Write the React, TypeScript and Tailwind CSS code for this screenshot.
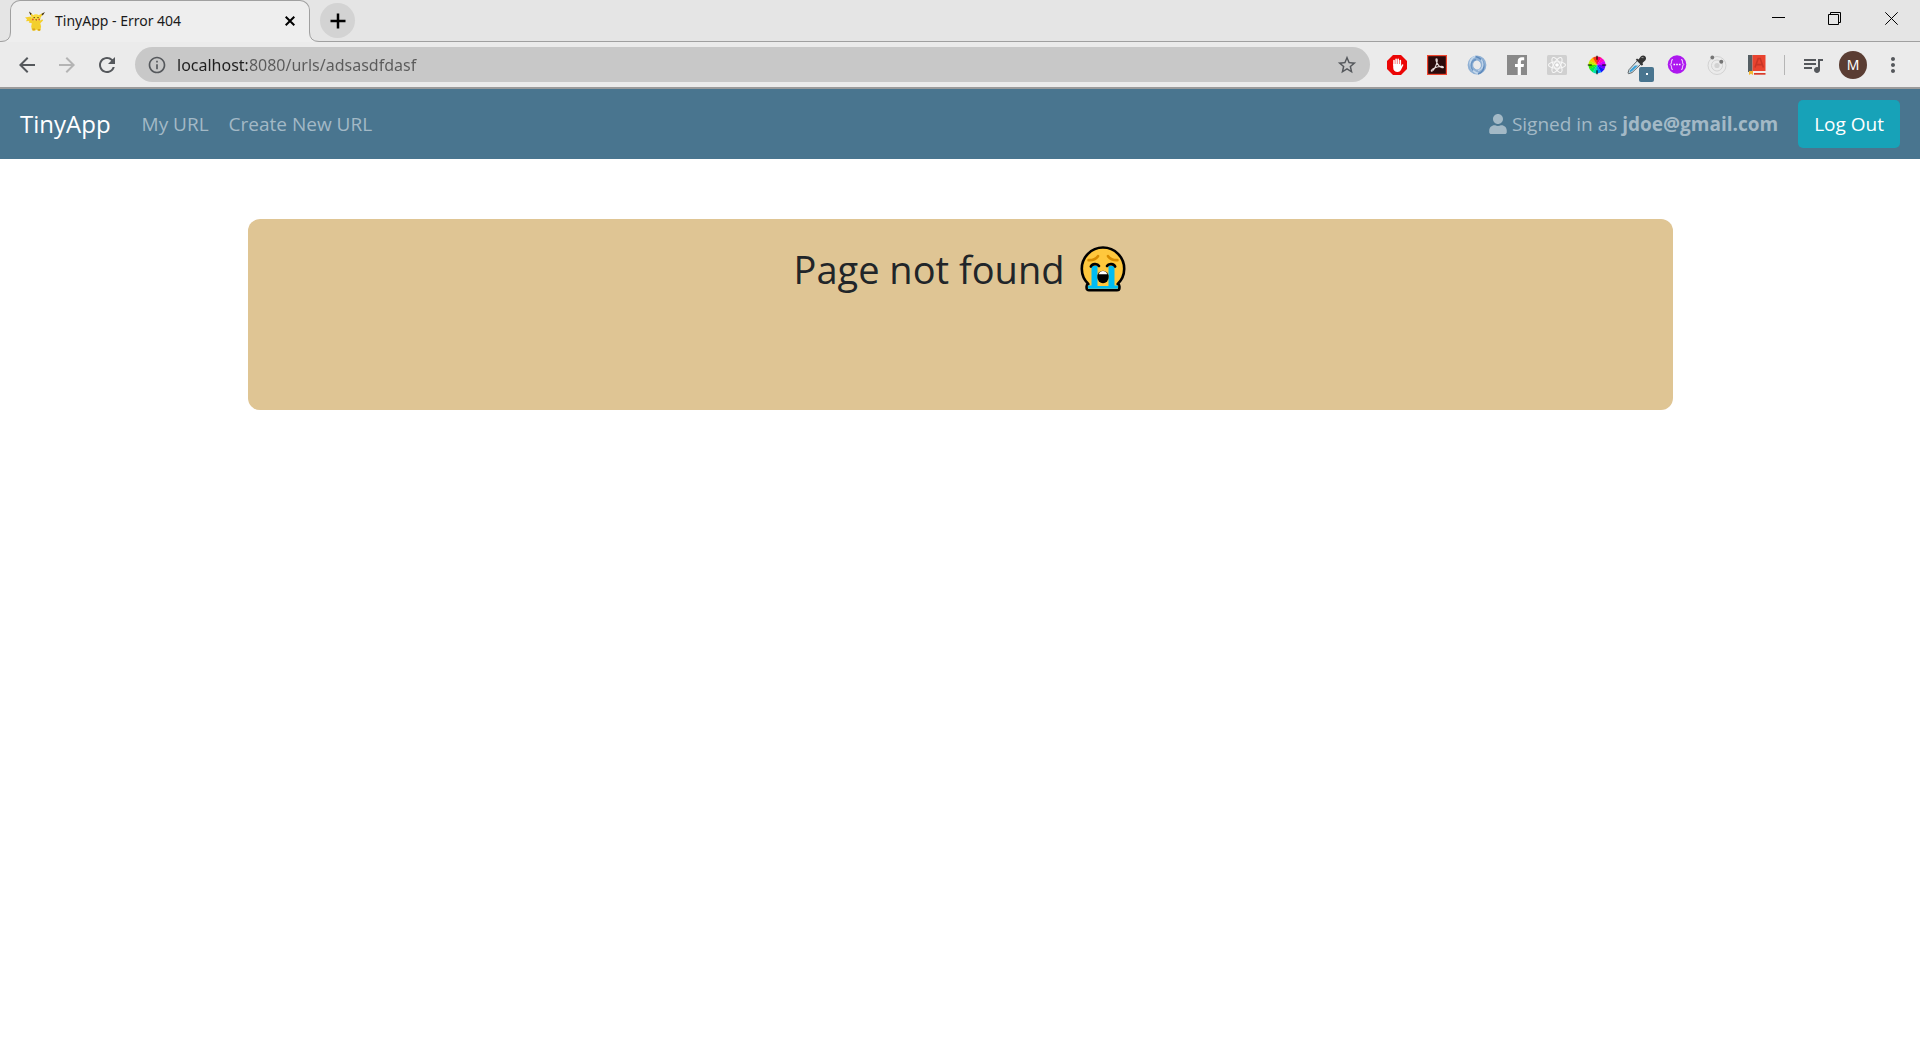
import type { ReactNode } from "react";
import { FaUser } from "react-icons/fa";
import { MdArrowBack, MdArrowForward, MdInfoOutline, MdMoreVert, MdQueueMusic, MdRefresh, MdStarBorder } from "react-icons/md";

function Pikachu() {
  return (
    <svg viewBox="0 0 20 20" className="size-5 shrink-0" aria-hidden="true">
      <path d="M0 6.400 5.800 5.400 8 8.500 7.500 12.500 3.800 11.600 4.400 10 1 10.200 2 8.300Z" fill="#f5cf2b" />
      <path d="M4.300 1 9 4.700 7 7Z" fill="#f4cf2b" />
      <path d="M4 .4 6.700 2.500 5.400 4.200Z" fill="#3b2b16" />
      <path d="M13 4.600 19.400 1.600 15 7.300Z" fill="#f4cf2b" />
      <path d="M16.300 3.100 19.900 1 17.800 4.500Z" fill="#3b2b16" />
      <ellipse cx="11" cy="7.200" rx="4.500" ry="3.900" fill="#fadb3c" />
      <path d="M7.400 9.800h7.300l2.600-1.500.8 1.200-2.800 2.700.8 3.400-.8 4.200h-2.400l-1.400-1.200-1.600 1.200-2.800-.2-.9-4.200Z" fill="#f3cf2d" />
      <path d="M7 17.500h3v1.600l-1.800.4ZM13 18h2.400l-.4 1.800h-1.800Z" fill="#d9a41c" />
      <circle cx="9.200" cy="6.600" r=".7" fill="#33230f" />
      <circle cx="13" cy="6.600" r=".7" fill="#33230f" />
      <circle cx="7.900" cy="8.500" r=".9" fill="#e2562c" />
      <circle cx="14.200" cy="8.500" r=".9" fill="#e2562c" />
      <path d="M10.200 8.200h2l-1 1.800Z" fill="#a52f1d" />
    </svg>
  );
}

function AdBlock() {
  return (
    <svg viewBox="0 0 20 20" className="size-5">
      <path d="M6 0h8l6 6v8l-6 6H6l-6-6V6Z" fill="#ec0606" />
      <path d="M7 10V5.600M9.100 10V4.200M11.200 10V4.200M13.300 10V5.600" stroke="#fff" strokeWidth="1.600" strokeLinecap="round" />
      <path d="M6.200 9h7.900v2.300l1-1.700q1-.8 1.300.3l-2.600 5.400Q12.800 17 10.800 17 6.200 16.800 6.200 12.500Z" fill="#fff" />
    </svg>
  );
}

function Acrobat() {
  return (
    <svg viewBox="0 0 20 20" className="size-5">
      <rect x=".6" y=".6" width="18.8" height="18.8" fill="#2b0b0d" stroke="#f1452e" strokeWidth="1.2" />
      <path d="M9.6 3.8C8.2 3.6 9.4 8.2 12 10.8c2 2 4.7 2.5 4.4 1.4-.4-1.4-5.4-.9-8.8.7-3 1.4-3.9 3.2-2.9 3.4 1.4.2 3.8-4.2 4.9-7.7.7-2.3 1-4.700 0-4.800Z" fill="none" stroke="#e6dada" strokeWidth="1.1" />
    </svg>
  );
}

function JsonSwirl() {
  return (
    <svg viewBox="0 0 20 20" className="size-5">
      <circle cx="10" cy="10" r="6.600" fill="none" stroke="#8fb0d4" strokeWidth="5.600" />
      <path d="M9 1C4 3 2.500 7 3.500 11s4 6.500 8 7.500" fill="none" stroke="#c4d8ec" strokeWidth="1.600" />
      <path d="M11 19c5-2 6.500-6 5.500-10s-4-6.500-8-7.500" fill="none" stroke="#5d89bb" strokeWidth="1.600" />
      <path d="M6 15.500C2.500 11 4 5.500 9 4.500" fill="none" stroke="#6c96c4" strokeWidth="1.400" />
      <path d="M14 4.500C17.500 9 16 14.500 11 15.500" fill="none" stroke="#bdd2e8" strokeWidth="1.400" />
      <ellipse cx="10" cy="10" rx="3.200" ry="4.400" fill="#eaeaea" transform="rotate(-12 10 10)" />
    </svg>
  );
}

function Facebook() {
  return (
    <svg viewBox="0 0 20 20" className="size-5">
      <path d="M0 0h20v20H0Z" fill="#898989" />
      <path d="M10.700 20v-8H8V9h2.700V6.500c0-2.800 1.700-4.200 4.100-4.200 1.100 0 2.100.1 2.400.1v2.900h-1.700c-1.300 0-1.600.7-1.600 1.600V9H17l-.4 3h-2.700v8Z" fill="#fff" />
    </svg>
  );
}

function ReactTools() {
  return (
    <svg viewBox="0 0 20 20" className="size-5">
      <rect width="20" height="20" rx="1.500" fill="#d0d0d0" />
      <g fill="none" stroke="#f7f7f7" strokeWidth="1.100">
        <ellipse cx="10" cy="10" rx="8.500" ry="3.300" />
        <ellipse cx="10" cy="10" rx="8.500" ry="3.300" transform="rotate(60 10 10)" />
        <ellipse cx="10" cy="10" rx="8.500" ry="3.300" transform="rotate(120 10 10)" />
      </g>
      <circle cx="10" cy="10" r="1.800" fill="#fff" />
    </svg>
  );
}

const wheelColors = ["#ff0060", "#ff00c8", "#d000ff", "#7000ff", "#1414ff", "#0090ff", "#00e0b0", "#00e850", "#30e800", "#c0f000", "#ffc000", "#ff4010"];

function ColorWheel() {
  return (
    <svg viewBox="0 0 20 20" className="size-5">
      {wheelColors.map((color, i) => (
        <path key={color} d="M10 10V1.500a8.500 8.500 0 0 1 4.400 1.200Z" fill={color} transform={`rotate(${i * 30} 10 10)`} />
      ))}
      <path d="M10 .8v4M10 15.200v4M.8 10h4M15.200 10h4" stroke="#000" strokeWidth="1.100" />
    </svg>
  );
}

function Eyedropper() {
  return (
    <span className="relative block size-5">
      <svg viewBox="0 0 20 20" className="size-5">
        <path d="M10.500 5.500 14 9 5 17.600 1.500 18.700 1 18l1-3.300Z" fill="#dfe7ea" stroke="#5b6468" strokeWidth="1" />
        <path d="M8 10.500h3L5 16.300l-2.700 1.300.9-2.500Z" fill="#3aa0d8" />
        <path d="M8.800 4.800 10 3.600l1.500.8L14 1.200c3-2 6.500 1 4.400 4L15.500 8l.6 1.500-1.300 1.300Z" fill="#353535" />
        <path d="m14.500 2.500 2 .2" stroke="#999" strokeWidth="1" />
      </svg>
      <span className="absolute top-3 left-3 flex size-[15px] items-center justify-center rounded-xs bg-[#49758f]">
        <span className="size-0.5 bg-white" />
      </span>
    </span>
  );
}

function PurpleBraces() {
  return (
    <svg viewBox="0 0 20 20" className="size-5">
      <circle cx="10" cy="9.500" r="9.300" fill="#ad18ef" />
      <path d="M6 4.700c-1.700 0-1.500 1-1.500 2.500 0 1.300-.4 2.100-1.700 2.300 1.300.2 1.700 1 1.700 2.300 0 1.500-.2 2.500 1.500 2.500M14 4.700c1.700 0 1.500 1 1.500 2.500 0 1.300.4 2.100 1.700 2.300-1.300.2-1.700 1-1.700 2.300 0 1.500.2 2.500-1.500 2.500" fill="none" stroke="#e7b8fb" strokeWidth="1.200" />
      <path d="M6.500 9.500h1.600M9.200 9.500h1.600M11.900 9.500h1.600" stroke="#fff" strokeWidth="1.500" />
    </svg>
  );
}

function Orbit() {
  return (
    <svg viewBox="0 0 20 20" className="size-5">
      <g fill="none" stroke="#d2d2d2">
        <circle cx="10" cy="10.500" r="9" />
        <circle cx="10" cy="10.500" r="5.500" />
      </g>
      <circle cx="10" cy="10.500" r="2.600" fill="#d2d2d2" />
      <circle cx="5.300" cy="2.500" r="1.900" fill="#757575" />
      <circle cx="14.300" cy="6.700" r="2" fill="#757575" />
    </svg>
  );
}

function Dictionary() {
  return (
    <svg viewBox="0 0 20 20" className="size-5">
      <path d="M1 0h4.500v17H1Z" fill="#545e63" />
      <path d="M5.500 0H18.500v16H5.500Z" fill="#e9432f" />
      <path d="M2 16.500h16.500v1.300H2Z" fill="#f7f0ee" />
      <path d="M7 18h11.500v1.700H7Z" fill="#d93a29" />
      <path d="M2 16h4v4l-2-1.300L2 20Z" fill="#f5b731" />
      <path d="m8 12.500 3.200-9h2l3.200 9M9.300 9.600h5.800" fill="none" stroke="#c93526" strokeWidth="1.600" />
    </svg>
  );
}

function SobbingFace() {
  return (
    <svg viewBox="0 0 46 46" className="size-[46px]" role="img" aria-label="Loudly crying face">
      <path d="M9 44.200c-1.500 0-2.400-.9-2.400-2.300v-1.600q0-1.800 1.700-2.300A21.200 21.200 0 1 1 37.700 38q1.700.5 1.700 2.300v1.600c0 1.400-.9 2.300-2.400 2.300Z" fill="#ffc83d" stroke="#000" strokeWidth="2.600" strokeLinejoin="round" />
      <path d="M11.500 20h6v20h11V20h6v19.500h3.600v1.700c0 1-.6 1.600-1.600 1.600H9.500c-1 0-1.600-.6-1.600-1.600v-1.700h3.600Z" fill="#00bcf2" />
      <path d="M10.800 20.600c1.200-3 6.600-3.400 8.200-.6M27 20c1.600-2.800 7-2.400 8.200.6" fill="none" stroke="#000" strokeWidth="2.600" strokeLinecap="round" />
      <path d="M8.600 14.200c4 .2 6.900-.6 9.400-4M28 10.200c2.500 3.400 5.400 4.200 9.400 4" fill="none" stroke="#d78c00" strokeWidth="2.700" strokeLinecap="round" />
      <ellipse cx="23" cy="31" rx="5.700" ry="6.200" fill="#000" />
      <path d="M18.700 28.200c1.400-4.200 7.200-4.200 8.600 0Z" fill="#fff" />
    </svg>
  );
}

function IconButton({ label, children }: { label: string; children: ReactNode }) {
  return (
    <button type="button" aria-label={label} className="flex size-10 shrink-0 items-center justify-center">
      {children}
    </button>
  );
}

const extensions = [
  { label: "Ad blocker", icon: <AdBlock /> },
  { label: "Acrobat", icon: <Acrobat /> },
  { label: "JSON formatter", icon: <JsonSwirl /> },
  { label: "Facebook", icon: <Facebook /> },
  { label: "React tools", icon: <ReactTools /> },
  { label: "Color wheel", icon: <ColorWheel /> },
  { label: "Color picker", icon: <Eyedropper /> },
  { label: "Code viewer", icon: <PurpleBraces /> },
  { label: "Orbit", icon: <Orbit /> },
  { label: "Dictionary", icon: <Dictionary /> },
];

function TabStrip() {
  return (
    <div className="flex h-[42px] border-b border-[#a0a0a0] bg-[#e5e5e5] pl-2.5">
      <div className="relative -mb-px flex w-[300px] items-center rounded-t-[10px] border border-b-0 border-[#a0a0a0] bg-[#eeeeee] pr-2.5 pb-0.5 pl-3.5">
        <svg viewBox="0 0 10 10" className="absolute bottom-0 -left-2.5 size-2.5" aria-hidden="true">
          <path d="M0 10V9.500Q9.500 9.500 9.500 0H10V10Z" fill="#eeeeee" />
          <path d="M0 9.500Q9.500 9.500 9.500 0" fill="none" stroke="#a0a0a0" />
        </svg>
        <svg viewBox="0 0 10 10" className="absolute -right-2.5 bottom-0 size-2.5" aria-hidden="true">
          <path d="M10 10V9.500Q.5 9.500 .5 0H0V10Z" fill="#eeeeee" />
          <path d="M10 9.500Q.5 9.500 .5 0" fill="none" stroke="#a0a0a0" />
        </svg>
        <Pikachu />
        <span className="ml-2.5 flex-1 text-sm whitespace-nowrap text-[#1a1a1a]">TinyApp - Error 404</span>
        <button type="button" aria-label="Close tab" className="p-1">
          <svg viewBox="0 0 10 10" className="size-2.5">
            <path d="m.7.7 8.600 8.600m0-8.600L.7 9.300" stroke="#000" strokeWidth="2" />
          </svg>
        </button>
      </div>
      <button type="button" aria-label="New tab" className="mt-[3px] ml-2.5 flex size-[35px] items-center justify-center rounded-full bg-[#d3d3d3]">
        <svg viewBox="0 0 16 16" className="size-4">
          <path d="M8 .5v15M.5 8h15" stroke="#000" strokeWidth="2.500" />
        </svg>
      </button>
      <div className="ml-auto flex h-9 items-center">
        <button type="button" aria-label="Minimize" className="flex w-14 justify-center">
          <svg viewBox="0 0 13 13" className="size-[13px]"><path d="M0 5.500h13" stroke="#000" /></svg>
        </button>
        <button type="button" aria-label="Restore" className="flex w-14 justify-center">
          <svg viewBox="0 0 13 13" className="size-[13px]">
            <path d="M.5 2.500h10v10H.5ZM2.500 2.500v-2h10v10h-2" fill="none" stroke="#000" />
          </svg>
        </button>
        <button type="button" aria-label="Close window" className="flex w-[58px] justify-center">
          <svg viewBox="0 0 13 13" className="size-[13px]"><path d="m.3.3 12.400 12.400M12.700.3.3 12.700" stroke="#000" /></svg>
        </button>
      </div>
    </div>
  );
}

function Toolbar() {
  return (
    <div className="flex h-[47px] items-center border-b-2 border-[#9b9b9b] bg-[#ebebeb] px-[7px]">
      <IconButton label="Back"><MdArrowBack className="size-6 text-[#55585c]" /></IconButton>
      <IconButton label="Forward"><MdArrowForward className="size-6 text-[#b4b4b4]" /></IconButton>
      <IconButton label="Reload"><MdRefresh className="size-6 text-[#55585c]" /></IconButton>
      <div className="ml-2 flex h-[35px] flex-1 items-center rounded-full bg-[#c8c8c8] px-3">
        <MdInfoOutline className="size-5 shrink-0 text-[#55585c]" />
        <input
          aria-label="Address"
          defaultValue="localhost:8080/urls/adsasdfdasf"
          className="ml-2.5 flex-1 bg-[linear-gradient(to_right,#1f1f1f_70px,#5a5a5a_70px)] bg-clip-text text-base text-transparent caret-black outline-none"
        />
        <button type="button" aria-label="Bookmark this page"><MdStarBorder className="size-[22px] text-[#55585c]" /></button>
      </div>
      <div className="ml-[7px] flex">
        {extensions.map(({ label, icon }) => (
          <IconButton key={label} label={label}>{icon}</IconButton>
        ))}
      </div>
      <span className="mr-2 ml-[7px] h-5 w-px bg-[#b5b5b5]" />
      <IconButton label="Media"><MdQueueMusic className="size-6 text-[#55585c]" /></IconButton>
      <IconButton label="Profile">
        <span className="flex size-7 items-center justify-center rounded-full bg-[#5a3d33] text-sm text-white">M</span>
      </IconButton>
      <IconButton label="Menu"><MdMoreVert className="size-6 text-[#55585c]" /></IconButton>
    </div>
  );
}

function SiteNav() {
  return (
    <nav className="flex h-[70px] items-center bg-[#49758f] px-5 font-['Open_Sans',sans-serif] text-[19px] text-[#a3b9c6]">
      <a href="#" className="mr-[31px] text-2xl text-white">TinyApp</a>
      <a href="#" className="mr-5">My URL</a>
      <a href="#">Create New URL</a>
      <span className="mr-5 ml-auto flex items-center">
        <FaUser className="mr-1 size-5" />
        <span>Signed in as <strong className="font-bold">jdoe@gmail.com</strong></span>
      </span>
      <button type="button" className="h-12 rounded-[5px] bg-[#17a2b8] px-4 text-white">Log Out</button>
    </nav>
  );
}

export default function App() {
  return (
    <div className="min-h-screen bg-white font-['Noto_Sans',sans-serif]">
      <header>
        <TabStrip />
        <Toolbar />
      </header>
      <SiteNav />
      <main className="mx-auto mt-[60px] min-h-[191px] max-w-[1425px] rounded-xl bg-[#dfc594] pt-[27px]">
        <h1 className="flex items-center justify-center gap-4 font-['Open_Sans',sans-serif] text-[38px] leading-[46px] text-[#212529]">
          Page not found
          <SobbingFace />
        </h1>
      </main>
    </div>
  );
}
